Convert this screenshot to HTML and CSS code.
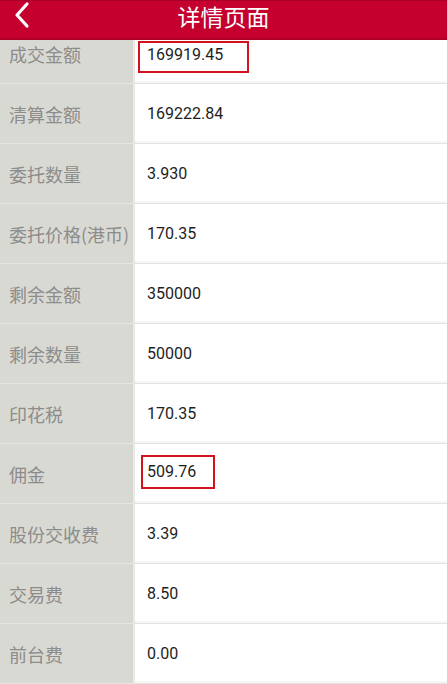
FILE: index.html
```html
<!DOCTYPE html>
<html lang="zh-CN">
<head>
    <meta charset="UTF-8">
    <meta name="viewport" content="width=device-width, initial-scale=1.0">
    <title>详情页面</title>
    <link rel="stylesheet" href="styles.css">
</head>
<body>
    <div class="page">
        <header class="topbar">
            <span class="back">
                <svg width="20" height="28" viewBox="0 0 20 28">
                    <path d="M15 3 L5 14 L15 25" fill="none" stroke="#ffffff" stroke-width="3.2" stroke-linecap="round" stroke-linejoin="round"/>
                </svg>
            </span>
            <h1>详情页面</h1>
        </header>
        <div class="detail-list">
            <div class="row">
                <div class="label">成交金额</div>
                <div class="value"><span class="mark mark-wide">169919.45</span></div>
            </div>
            <div class="row">
                <div class="label">清算金额</div>
                <div class="value">169222.84</div>
            </div>
            <div class="row">
                <div class="label">委托数量</div>
                <div class="value">3.930</div>
            </div>
            <div class="row">
                <div class="label">委托价格(港币)</div>
                <div class="value">170.35</div>
            </div>
            <div class="row">
                <div class="label">剩余金额</div>
                <div class="value">350000</div>
            </div>
            <div class="row">
                <div class="label">剩余数量</div>
                <div class="value">50000</div>
            </div>
            <div class="row">
                <div class="label">印花税</div>
                <div class="value">170.35</div>
            </div>
            <div class="row">
                <div class="label">佣金</div>
                <div class="value"><span class="mark mark-small">509.76</span></div>
            </div>
            <div class="row">
                <div class="label">股份交收费</div>
                <div class="value">3.39</div>
            </div>
            <div class="row">
                <div class="label">交易费</div>
                <div class="value">8.50</div>
            </div>
            <div class="row">
                <div class="label">前台费</div>
                <div class="value">0.00</div>
            </div>
        </div>
    </div>
</body>
</html>
```

FILE: styles.css
```css
html, body {
    margin: 0;
    padding: 0;
    background: #ffffff;
}
body {
    font-family: Roboto, "Noto Sans CJK SC", sans-serif;
    width: 447px;
    height: 684px;
    overflow: hidden;
}
.page {
    display: flex;
    flex-direction: column;
}
.topbar {
    position: relative;
    z-index: 2;
    height: 40px;
    background-color: #c5002e;
    border-top: 1px solid #a8002a;
    border-bottom: 2px solid #b00029;
    box-sizing: border-box;
    display: flex;
    align-items: flex-start;
    padding-left: 12px;
}
.back {
    display: flex;
    width: 20px;
    height: 28px;
}
.topbar h1 {
    flex: 1;
    margin: 0;
    padding-right: 32px;
    text-align: center;
    color: #ffffff;
    font-family: "Noto Sans CJK SC", sans-serif;
    font-weight: 400;
    font-size: 23px;
    line-height: 30px;
}
.detail-list {
    margin-top: -16px;
}
.row {
    display: flex;
    height: 60px;
}
.label {
    width: 135px;
    flex: none;
    padding-left: 9px;
    background-color: #d9d9d4;
    border-right: 2px solid #e9e9e6;
    border-bottom: 1px solid #e4e4e0;
    box-sizing: border-box;
    display: flex;
    align-items: center;
    color: #8c8c8a;
    font-family: "Noto Sans CJK SC", sans-serif;
    font-size: 18px;
    white-space: nowrap;
}
.value {
    flex: 1;
    display: flex;
    align-items: center;
    padding-left: 12px;
    border-bottom: 1px solid #e2e2e2;
    box-shadow: inset 0 -3px 0 -1px #f6f6f6;
    color: #1e1e1e;
    font-size: 16px;
}
.mark {
    display: inline-block;
    border: 2px solid #d3121f;
    line-height: 20px;
}
.mark-wide {
    padding: 2px 24px 6px 7px;
    margin-left: -9px;
    margin-top: 6px;
}
.mark-small {
    padding: 5px 17px 5px 4px;
    margin-left: -6px;
    margin-bottom: 4px;
}
```
